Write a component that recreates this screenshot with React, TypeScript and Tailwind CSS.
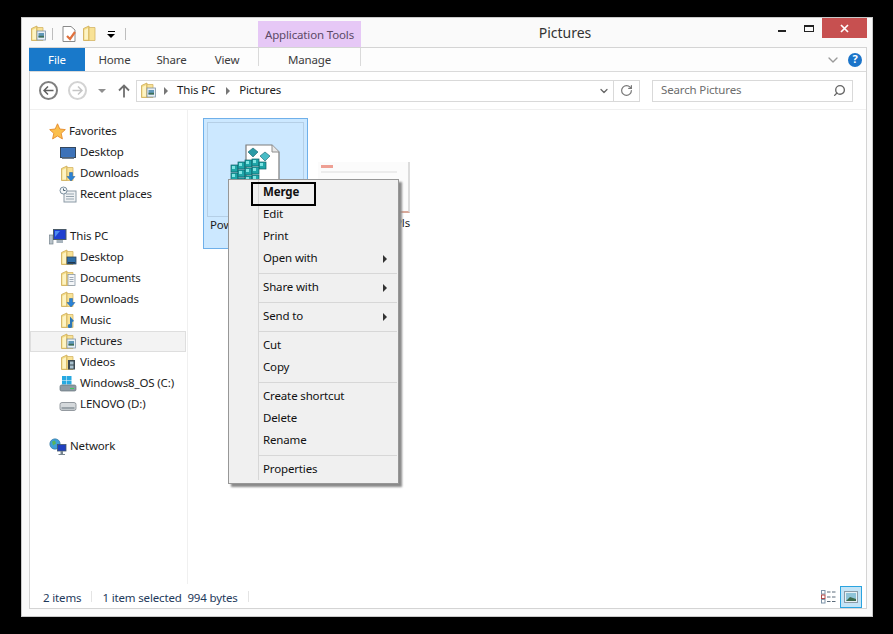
import type { ReactNode } from "react";
import { ChevronDown, RotateCw, Search } from "lucide-react";

// Explorer's yellow folder, the overlay is what tells the library folders apart
function Folder({ children }: { children?: ReactNode }) {
  return (
    <svg width="18" height="18" viewBox="0 0 18 18" className="shrink-0">
      <path d="M2.5 3.5 L8 1 V15.5 L2.5 15.5 Z" fill="#f4dc86" stroke="#cdaa52" strokeWidth="0.8" />
      <path d="M8 2.5 H14 V15.5 H8 Z" fill="#f8e296" stroke="#d4b566" strokeWidth="0.8" />
      <path d="M3.5 5 L7 3.2 V14.5 H3.5 Z" fill="#fdf3c4" />
      {children}
    </svg>
  );
}

const pictureOverlay = (
  <>
    <rect x="8" y="6" width="8.5" height="9" fill="#e8eff5" stroke="#7f93a6" strokeWidth="0.8" />
    <rect x="9.5" y="8" width="5.5" height="4.5" fill="#5f97b8" />
    <rect x="9.5" y="10.8" width="5.5" height="1.7" fill="#3f6f55" />
  </>
);
const desktopOverlay = (
  <>
    <rect x="8" y="8" width="9" height="7" fill="#2f6ea8" stroke="#31465c" strokeWidth="0.8" />
    <rect x="9" y="13" width="7" height="1.5" fill="#22384e" />
  </>
);
const docOverlay = (
  <>
    <rect x="9" y="4.5" width="7" height="11" fill="#f4f6f8" stroke="#8a98a6" strokeWidth="0.8" />
    <path d="M10.5 7.5h4M10.5 9.5h4M10.5 11.5h4" stroke="#8a98a6" strokeWidth="0.8" />
  </>
);
const downloadOverlay = <path d="M10.5 7.5h3v4h2.5l-4 4.5-4-4.5h2.5z" fill="#2a82d6" stroke="#1c5fa3" strokeWidth="0.5" />;
const musicOverlay = <path d="M11 4.5 L15 9 L13.2 10 V13.5 A2.3 2 0 1 1 11 12 Z" fill="#2c77b8" />;
const videoOverlay = (
  <>
    <rect x="9" y="6" width="7" height="9.5" fill="#3d4a52" />
    <rect x="11" y="7.5" width="3.5" height="3" fill="#a9c2cf" />
    <rect x="11" y="11.5" width="3.5" height="3" fill="#a9c2cf" />
  </>
);

function Star() {
  return (
    <svg width="17" height="17" viewBox="0 0 17 17" className="shrink-0">
      <path d="M8.5 .8 L10.8 6 L16.3 6.6 L12.2 10.3 L13.4 15.9 L8.5 13 L3.6 15.9 L4.8 10.3 L.7 6.6 L6.2 6 Z" fill="#fbbf4c" stroke="#e58a2b" strokeWidth="0.9" />
    </svg>
  );
}

function Monitor() {
  return (
    <svg width="18" height="18" viewBox="0 0 18 18" className="shrink-0">
      <rect x="1.5" y="3.5" width="15" height="10" fill="#3a76c0" stroke="#34475d" />
      <rect x="2.5" y="4.5" width="13" height="8" fill="#3d72b8" />
      <rect x="3" y="13.5" width="12" height="1.5" fill="#6f7f8f" />
    </svg>
  );
}

function Recent() {
  return (
    <svg width="18" height="18" viewBox="0 0 18 18" className="shrink-0">
      <rect x="5" y="5" width="12" height="11" fill="#eef1f3" stroke="#8b9aa6" />
      <path d="M7 8h8M7 10.5h8M7 13h8" stroke="#97a5b0" />
      <circle cx="4.5" cy="4.5" r="3.5" fill="#f3f6f8" stroke="#7c8f9e" />
      <path d="M4.5 2.5v2h2" stroke="#4d6475" fill="none" />
    </svg>
  );
}

function ThisPC() {
  return (
    <svg width="18" height="18" viewBox="0 0 18 18" className="shrink-0">
      <rect x="0.5" y="7" width="3.5" height="9" fill="#b9c3ca" stroke="#75838d" strokeWidth="0.7" />
      <rect x="4.5" y="1.5" width="12.5" height="10" fill="#1f3fd0" stroke="#4a5a68" />
      <path d="M6 3h5l-5 6z" fill="#4f8df0" />
      <rect x="7.5" y="12" width="6.5" height="3" fill="#a8b4bd" />
    </svg>
  );
}

function SystemDrive() {
  return (
    <svg width="18" height="18" viewBox="0 0 18 18" className="shrink-0">
      <rect x="3" y="1" width="4.5" height="4" fill="#27a9e1" />
      <rect x="8" y="1" width="4.5" height="4" fill="#27a9e1" />
      <rect x="3" y="5.5" width="4.5" height="4" fill="#27a9e1" />
      <rect x="8" y="5.5" width="4.5" height="4" fill="#27a9e1" />
      <rect x="1" y="10" width="16" height="6" rx="1.5" fill="#8e9aa3" stroke="#66727b" strokeWidth="0.7" />
      <rect x="11" y="13" width="4" height="1" fill="#3ccf5a" />
    </svg>
  );
}

function Drive() {
  return (
    <svg width="18" height="18" viewBox="0 0 18 18" className="shrink-0">
      <rect x="1" y="6.5" width="16" height="8" rx="2" fill="#d5d9dc" stroke="#7d858b" strokeWidth="0.8" />
      <rect x="2.5" y="11" width="13" height="2.3" fill="#9aa3a9" />
    </svg>
  );
}

function NetworkIcon() {
  return (
    <svg width="18" height="18" viewBox="0 0 18 18" className="shrink-0">
      <circle cx="6" cy="6" r="5.2" fill="#3f9fd8" stroke="#2f6f99" strokeWidth="0.6" />
      <path d="M3 3.5 l3 -1 l1 3 l-3 2z M8 7 l2 0 l0 2z" fill="#58b45a" />
      <rect x="8.5" y="6.5" width="8.5" height="6.5" fill="#1f3fc0" stroke="#44586a" strokeWidth="0.8" />
      <rect x="11.5" y="13" width="2.5" height="3" fill="#77858f" />
      <rect x="9.5" y="16" width="6.5" height="1" fill="#77858f" />
    </svg>
  );
}

type NavItem = { label: string; icon: ReactNode; top?: boolean; active?: boolean };

const favorites: NavItem[] = [
  { label: "Favorites", icon: <Star />, top: true },
  { label: "Desktop", icon: <Monitor /> },
  { label: "Downloads", icon: <Folder>{downloadOverlay}</Folder> },
  { label: "Recent places", icon: <Recent /> },
];

const thisPc: NavItem[] = [
  { label: "This PC", icon: <ThisPC />, top: true },
  { label: "Desktop", icon: <Folder>{desktopOverlay}</Folder> },
  { label: "Documents", icon: <Folder>{docOverlay}</Folder> },
  { label: "Downloads", icon: <Folder>{downloadOverlay}</Folder> },
  { label: "Music", icon: <Folder>{musicOverlay}</Folder> },
  { label: "Pictures", icon: <Folder>{pictureOverlay}</Folder>, active: true },
  { label: "Videos", icon: <Folder>{videoOverlay}</Folder> },
  { label: "Windows8_OS (C:)", icon: <SystemDrive /> },
  { label: "LENOVO (D:)", icon: <Drive /> },
];

function NavRow({ item }: { item: NavItem }) {
  return (
    <div
      className={
        "h-[21px] mr-[1px] flex items-center gap-[3px] border " +
        (item.top ? "pl-[18px] " : "pl-[28px] ") +
        (item.active ? "bg-[#f3f3f3] border-[#dedede]" : "border-transparent")
      }
    >
      {item.icon}
      <span className="whitespace-nowrap pb-[2px]">{item.label}</span>
    </div>
  );
}

function MenuRow({ label, bold, arrow }: { label: string; bold?: boolean; arrow?: boolean }) {
  return (
    <div className="relative h-[22px] flex items-center pl-[34px] pr-[11px]">
      <span className={bold ? "font-bold pb-[2px]" : "pb-[2px]"}>{label}</span>
      {bold && <div className="absolute left-[22px] top-0 w-[65px] h-[24px] border-2 border-black" />}
      {arrow && <div className="ml-auto w-0 h-0 border-y-[4px] border-y-transparent border-l-[4px] border-l-[#333]" />}
    </div>
  );
}

function MenuSep() {
  return (
    <div className="h-[7px] flex items-center pl-[29px] pr-[1px]">
      <div className="w-full h-px bg-[#d7d7d7]" />
    </div>
  );
}

function Crumb() {
  return <div className="w-0 h-0 border-y-[4px] border-y-transparent border-l-[4px] border-l-[#777]" />;
}

function RegistryIcon() {
  return (
    <svg width="60" height="60" viewBox="0 0 60 60">
      <path d="M17 1 H43 L50 8 V52 H17 Z" fill="#ffffff" stroke="#7d7d7d" strokeWidth="1.2" />
      <path d="M43 1 V8 H50" fill="#e8e8e8" stroke="#8e8e8e" />
      <path d="M24 4 l5 4 l-5 5 l-5 -5z" fill="#2b9aa6" stroke="#14626c" strokeWidth="0.6" />
      <path d="M36 8 l5 4 l-5 5 l-5 -5z" fill="#49bcc6" stroke="#14626c" strokeWidth="0.6" />
      <path d="M34 38 l4 4 h-8z" fill="#b8c2c4" />
      {[
        [2, 21], [9, 18], [16, 16], [23, 15], [30, 18], [2, 29], [9, 26], [16, 24], [23, 23], [2, 37], [9, 34], [16, 32], [23, 31], [9, 42], [16, 40],
      ].map(([x, y]) => (
        <g key={`${x}-${y}`}>
          <rect x={x} y={y} width="7" height="7" fill="#1fa5a8" stroke="#0d5f66" strokeWidth="0.7" />
          <rect x={x + 1} y={y + 1} width="3" height="3" fill="#7fe4e2" />
        </g>
      ))}
    </svg>
  );
}

export default function App() {
  return (
    <div className="w-[893px] h-[634px] bg-black pt-[17px] pl-[21px] overflow-hidden text-[11.5px] tracking-[-0.15px] text-[#1c1c1c] font-['Noto_Sans','Open_Sans',sans-serif]">
      <div className="relative w-[852px] h-[600px] bg-[#fafafa] border border-[#c9c9c9] flex flex-col">
        {/* title bar */}
        <div className="h-[29px] pl-[7px] pr-[5px] flex shrink-0">
          <div className="w-[229px] flex items-center pt-[3px]">
            <Folder>{pictureOverlay}</Folder>
            <div className="w-px h-[12px] bg-[#bdbdbd] ml-[5px]" />
            <svg width="18" height="18" viewBox="0 0 18 18" className="ml-[7px]">
              <path d="M3 1.5 H11 L15 5 V16.5 H3 Z" fill="#fff" stroke="#8a8a8a" />
              <path d="M7 11 l3 3 l5 -7" fill="none" stroke="#e0703c" strokeWidth="2.2" />
            </svg>
            <div className="ml-[3px]">
              <Folder />
            </div>
            <div className="ml-[8px] flex flex-col items-center gap-[2px]">
              <div className="w-[7px] h-px bg-black" />
              <div className="w-0 h-0 border-x-[4px] border-x-transparent border-t-[4px] border-t-black" />
            </div>
            <div className="w-px h-[12px] bg-[#bdbdbd] ml-[10px]" />
          </div>
          <div className="w-[103px] mt-[3px] pt-[1px] bg-[#e6c8f6] text-[#5c4a66] flex items-center justify-center">
            Application Tools
          </div>
          <div className="w-[408px] text-center text-[14px] leading-[29px] text-[#333] tracking-normal">Pictures</div>
          <div className="flex-1 relative">
            <div className="flex items-start h-full">
              <div className="w-[8px] h-[2px] bg-[#222] mt-[12px] ml-[9px]" />
              <div className="w-[10px] h-[7px] border border-[#222] border-t-2 mt-[7px] ml-[18px]" />
              <div className="w-[45px] h-[20px] ml-[8px] bg-[#c75050] flex items-center justify-center">
                <svg width="9" height="9" viewBox="0 0 9 9">
                  <path d="M1 1 L8 8 M8 1 L1 8" stroke="#fff" strokeWidth="1.7" />
                </svg>
              </div>
            </div>
          </div>
        </div>

        {/* panel */}
        <div className="ml-[7px] mr-[5px] h-[562px] bg-white border border-[#d4d4d4] flex flex-col">
          {/* tabs */}
          <div className="h-[24px] flex items-stretch border-b border-[#dadada] bg-[#fdfdfd] shrink-0 text-[#3c3c3c]">
            <div className="w-[56px] -ml-px bg-[#1979ca] text-white flex items-center justify-center">File</div>
            <div className="w-[59px] flex items-center justify-center">Home</div>
            <div className="w-[55px] flex items-center justify-center">Share</div>
            <div className="w-[59px] flex items-center justify-center pr-[3px]">View</div>
            <div className="w-[103px] flex items-center justify-center border-x border-[#dadada] mb-[5px] pt-[5px]">Manage</div>
            <div className="flex-1" />
            <ChevronDown size={16} className="text-[#9a9a9a] self-center mr-[7px]" />
            <div className="w-[14px] h-[14px] rounded-full bg-[#1b74c9] text-white text-[11px] font-bold flex items-center justify-center self-center mr-[4px]">
              ?
            </div>
          </div>

          {/* address row */}
          <div className="h-[38px] flex items-center border-b border-[#f0f0f0] shrink-0">
            <div className="w-[19px] h-[19px] ml-[9px] rounded-full border-2 border-[#7f7f7f] flex items-center justify-center">
              <svg width="11" height="9" viewBox="0 0 11 9">
                <path d="M5 .5 L1 4.5 L5 8.5 M1 4.5 H10.5" fill="none" stroke="#5f5f5f" strokeWidth="1.5" />
              </svg>
            </div>
            <div className="w-[19px] h-[19px] ml-[10px] rounded-full border-2 border-[#d3d3d3] flex items-center justify-center">
              <svg width="11" height="9" viewBox="0 0 11 9">
                <path d="M6 .5 L10 4.5 L6 8.5 M10 4.5 H.5" fill="none" stroke="#c5c5c5" strokeWidth="1.5" />
              </svg>
            </div>
            <div className="ml-[11px] w-0 h-0 border-x-[4px] border-x-transparent border-t-[4px] border-t-[#8f8f8f]" />
            <svg width="12" height="14" viewBox="0 0 12 14" className="ml-[12px]">
              <path d="M1 6.5 L6 1.5 L11 6.5 M6 1.5 V13.5" fill="none" stroke="#6f6f6f" strokeWidth="1.8" />
            </svg>
            <div className="ml-[6px] w-[504px] h-[22px] border border-[#d9d9d9] flex items-center">
              <div className="ml-[2px]">
                <Folder>{pictureOverlay}</Folder>
              </div>
              <div className="ml-[7px]"><Crumb /></div>
              <span className="ml-[9px] pb-[2px]">This PC</span>
              <div className="ml-[11px]"><Crumb /></div>
              <span className="ml-[9px] pb-[2px]">Pictures</span>
              <ChevronDown size={12} strokeWidth={2.5} className="ml-auto mr-[3px] text-[#666]" />
              <div className="w-px h-full bg-[#d9d9d9]" />
              <div className="w-[25px] flex justify-center">
                <RotateCw size={13} strokeWidth={2.2} className="text-[#777]" />
              </div>
            </div>
            <div className="ml-[12px] w-[201px] h-[22px] border border-[#d9d9d9] flex items-center pl-[8px] pr-[6px] text-[#6d6d6d]">
              <span className="pb-[2px]">Search Pictures</span>
              <Search size={13} strokeWidth={2.5} className="ml-auto -scale-x-100 text-[#666]" />
            </div>
          </div>

          {/* body */}
          <div className="flex-1 flex min-h-0">
            <div className="w-[158px] border-r border-[#f0f0f0] pt-[11px] shrink-0">
              {favorites.map((item) => (
                <NavRow key={item.label} item={item} />
              ))}
              <div className="h-[21px]" />
              {thisPc.map((item) => (
                <NavRow key={item.label} item={item} />
              ))}
              <div className="h-[21px]" />
              <NavRow item={{ label: "Network", icon: <NetworkIcon />, top: true }} />
            </div>

            <div className="flex-1 flex items-start pt-[8px] pl-[15px]">
              <div className="w-[105px] h-[131px] bg-[#cce8ff] border border-[#6fb0ea] p-[3px] flex flex-col">
                <div className="h-[95px] border border-[#b5cfe6] flex items-end pl-[21px] pb-[12px] shrink-0">
                  <RegistryIcon />
                </div>
                <div className="pl-[3px] -mt-[1px]">Pow</div>
              </div>
              <div className="w-[92px] ml-[10px] h-[131px] flex flex-col pt-[44px]">
                <div className="h-[51px] bg-[#fbfbfb] border-r-2 border-b-2 border-r-[#dcdcdc] border-b-[#d9a99a] flex flex-col p-[3px] gap-[3px]">
                  <div className="h-[3px] w-[12px] bg-[#ee9f93]" />
                  <div className="h-[2px] w-[90%] bg-[#ececec]" />
                </div>
                <div className="text-right pt-[1px]">Pls</div>
              </div>
            </div>
          </div>

          {/* status bar */}
          <div className="h-[24px] flex items-center shrink-0 text-[#1e395b] pt-[1px]">
            <span className="ml-[13px] pt-[2px]">2 items</span>
            <div className="w-px h-[11px] bg-[#e4e4e4] ml-[10px]" />
            <span className="ml-[10px] pt-[2px]">1 item selected&nbsp;&nbsp;994 bytes</span>
            <div className="w-px h-[11px] bg-[#e4e4e4] ml-[10px]" />
            <svg width="15" height="14" viewBox="0 0 15 14" className="ml-auto">
              <rect x=".5" y=".5" width="3.5" height="3.5" fill="#fff" stroke="#7d93a8" />
              <rect x=".5" y="5" width="3.5" height="3.5" fill="#fff" stroke="#b04a4a" />
              <rect x=".5" y="9.5" width="3.5" height="3.5" fill="#fff" stroke="#7d93a8" />
              <path d="M6 2h3.5M11 2h3.5M6 7h3.5M11 7h3.5M6 11.5h3.5M11 11.5h3.5" stroke="#5b6b7a" strokeWidth="1" />
            </svg>
            <div className="ml-[4px] mr-[4px] w-[22px] h-[22px] bg-[#c4e4f6] border border-[#2aa4e0] flex items-center justify-center">
              <svg width="14" height="12" viewBox="0 0 14 12">
                <rect x=".5" y=".5" width="13" height="11" fill="#e9f1f5" stroke="#8b9ba8" />
                <rect x="2" y="2" width="10" height="8" fill="#8fc4d8" />
                <path d="M2 10 L6 6 L12 8 V10 Z" fill="#3d6b4c" />
              </svg>
            </div>
          </div>
        </div>

        {/* context menu */}
        <div className="absolute left-[206px] top-[161px] w-[171px] bg-[#f0f0f0] border border-[#979797] pt-[2px] pb-[2px] shadow-[3px_3px_2px_#8a8a8a] text-[#111]">
          <div className="absolute left-[29px] top-0 bottom-[3px] w-px bg-[#d7d7d7]" />
          <MenuRow label="Merge" bold />
          <MenuRow label="Edit" />
          <MenuRow label="Print" />
          <MenuRow label="Open with" arrow />
          <MenuSep />
          <MenuRow label="Share with" arrow />
          <MenuSep />
          <MenuRow label="Send to" arrow />
          <MenuSep />
          <MenuRow label="Cut" />
          <MenuRow label="Copy" />
          <MenuSep />
          <MenuRow label="Create shortcut" />
          <MenuRow label="Delete" />
          <MenuRow label="Rename" />
          <MenuSep />
          <MenuRow label="Properties" />
        </div>
      </div>
    </div>
  );
}
